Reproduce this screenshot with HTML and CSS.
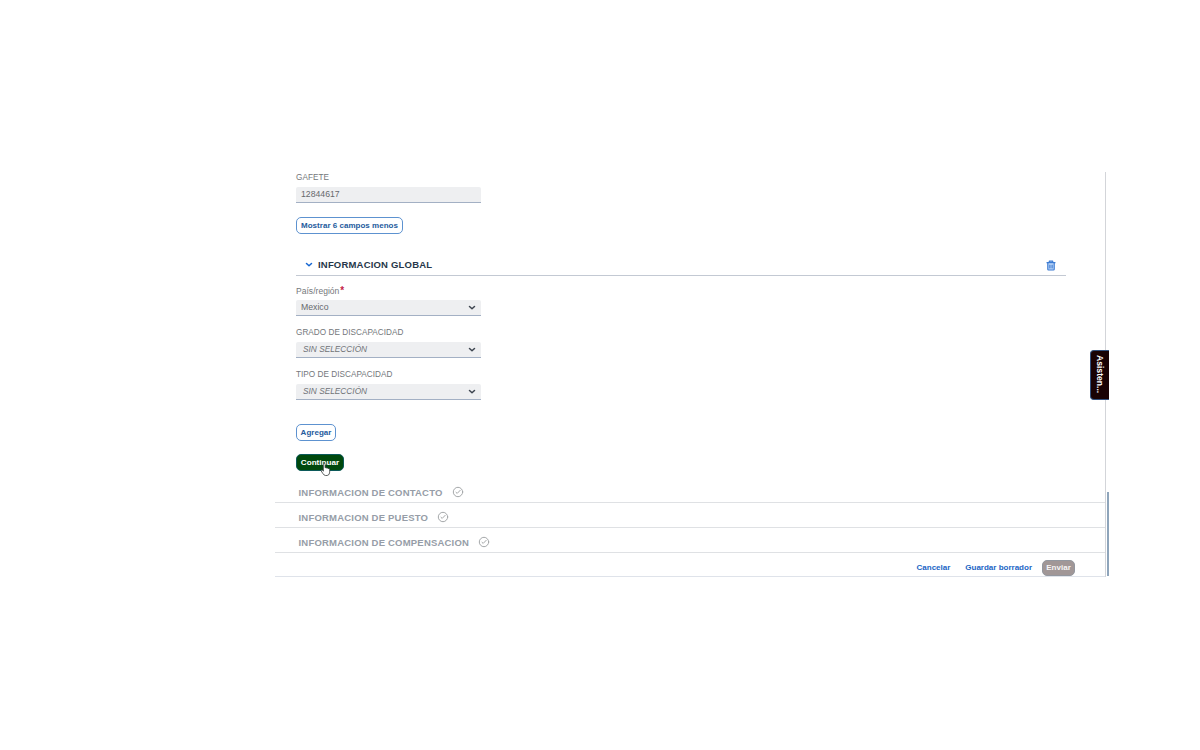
FILE: index.html
```html
<!DOCTYPE html>
<html lang="es">
<head>
<meta charset="utf-8">
<title>Información global</title>
<link rel="stylesheet" href="styles.css">
</head>
<body>
<svg class="defs" aria-hidden="true">
  <symbol id="check" viewBox="0 0 12 12"><circle cx="6" cy="6" r="4.7"/><path d="M4 6.3 5.2 7.4 8.2 4.3"/></symbol>
  <symbol id="chevron" viewBox="0 0 8 6"><path d="M1.5 1.5 4 3.8 6.5 1.5"/></symbol>
</svg>
<main class="app">
  <div class="content">
    <section class="form">
      <label class="label"><span>GAFETE</span></label>
      <div class="field number"><span>12844617</span></div>
      <button class="btn outline more"><span>Mostrar 6 campos menos</span></button>
      <header class="section-head">
        <svg class="toggle"><use href="#chevron"/></svg>
        <h2>INFORMACION GLOBAL</h2>
        <svg class="trash" viewBox="0 0 10 11"><path d="M1 2.7h8M3.3 2.5V1.2h3.4v1.3M1.8 3v6.2q0 .8.8.8h4.8q.8 0 .8-.8V3M3.9 5v3M6.1 5v3"/></svg>
      </header>
      <label class="label country"><span>País/región</span><b>*</b></label>
      <div class="field select"><span>Mexico</span><svg><use href="#chevron"/></svg></div>
      <label class="label next"><span>GRADO DE DISCAPACIDAD</span></label>
      <div class="field select empty"><span>SIN SELECCIÓN</span><svg><use href="#chevron"/></svg></div>
      <label class="label next"><span>TIPO DE DISCAPACIDAD</span></label>
      <div class="field select empty"><span>SIN SELECCIÓN</span><svg><use href="#chevron"/></svg></div>
      <button class="btn outline add"><span>Agregar</span></button>
      <button class="btn primary"><span>Continuar</span>
        <svg class="cursor" viewBox="0 0 11 14"><path d="M3.3 8.2V1.8q0-1 .9-1t.9 1v3.4q1.2-.5 1.5.3 1.1-.4 1.4.5 1.5-.3 1.7 1v2.6q0 3-2.5 3.4H5.4Q3.9 12.8 3 11.2L1.2 8.5q-.4-1 .5-1.1.7 0 1.6.8Z"/></svg>
      </button>
    </section>
    <div class="step first"><h3>INFORMACION DE CONTACTO</h3><svg><use href="#check"/></svg></div>
    <div class="step"><h3>INFORMACION DE PUESTO</h3><svg><use href="#check"/></svg></div>
    <div class="step"><h3>INFORMACION DE COMPENSACION</h3><svg><use href="#check"/></svg></div>
    <footer class="actions">
      <a class="cancel">Cancelar</a><a class="draft">Guardar borrador</a><button class="btn send"><span>Enviar</span></button>
    </footer>
  </div>
  <div class="thumb"></div>
  <aside class="assistant"><span>Asisten...</span></aside>
</main>
</body>
</html>
```
FILE: styles.css
```css
* { box-sizing: border-box; }
body { margin: 0; background: #fff; font-family: "Liberation Sans", sans-serif; }
.defs { position: absolute; width: 0; height: 0; }
svg { fill: none; stroke-linecap: round; stroke-linejoin: round; }
.app { position: relative; display: flex; width: 834px; height: 405px; margin: 172px 0 0 275px; }
.content { width: 831px; border-right: 1px solid #d3d5d9; }
.form { height: 308px; padding-left: 21px; display: flex; flex-direction: column; align-items: flex-start; }
.label { height: 12px; margin-bottom: 3px; font-size: 8.2px; line-height: 12px; letter-spacing: .03px; color: #74777b; display: flex; white-space: nowrap; }
.label b { margin-left: 1px; color: #c42348; font-size: 10px; }
.country { font-size: 8.5px; }
.label.next { margin-top: 11px; }
.field { width: 185px; height: 16px; flex: none; padding: 0 5px; background: #eeeff1; border-bottom: 1px solid #a3b0c4; border-radius: 2px 2px 0 0; font-size: 8.7px; line-height: 15px; color: #66696d; display: flex; justify-content: space-between; align-items: center; white-space: nowrap; }
.field svg { width: 8px; height: 6px; margin-right: .5px; stroke: #3e4650; stroke-width: 1.5; }
.field.empty { font-style: italic; padding-left: 7px; color: #707378; font-size: 8.3px; }
.btn { position: relative; height: 17px; flex: none; padding: 0; border: 1px solid #5d92d0; border-radius: 5px; background: #fff; color: #255b9d; font: bold 8px/15px "Liberation Sans", sans-serif; letter-spacing: .02px; white-space: nowrap; }
.more { width: 107px; margin-top: 14px; }
.section-head { width: 770px; height: 21px; margin: 21px 0 9px; display: flex; align-items: center; border-bottom: 1px solid #c3c9d3; }
.toggle { width: 8px; height: 6px; margin: 0 5px 0 9px; stroke: #1767d2; stroke-width: 1.5; }
h2 { margin: 0; font-size: 9.5px; line-height: 16px; font-weight: bold; letter-spacing: .19px; color: #26374a; white-space: nowrap; }
.trash { width: 10px; height: 11px; margin-left: auto; margin-right: 10px; stroke: #3c7bd2; stroke-width: 1.2; fill: #c2dafa; }
.add { width: 40px; margin-top: 24px; }
.primary { width: 48px; margin-top: 13px; background: #00490d; border-color: #0c5a5a; color: #fff; font-size: 8.1px; }
.cursor { position: absolute; width: 11px; height: 15px; left: 22.5px; top: 6.5px; fill: #fff; stroke: #353a3a; stroke-width: .8; }
.step { height: 25px; padding: 6px 0 0 23.5px; display: flex; align-items: flex-start; border-bottom: 1px solid #dfe1e4; }
.first { height: 23px; padding-top: 4px; }
h3 { margin: 0; font-size: 9.5px; line-height: 17px; font-weight: bold; letter-spacing: .2px; color: #969da7; white-space: nowrap; }
.step svg { width: 12px; height: 12px; margin: 2px 0 0 9px; stroke: #a5a8aa; stroke-width: 1; }
.actions { height: 24px; display: flex; align-items: center; justify-content: flex-end; padding: 6px 30px 0 0; border-bottom: 1px solid #dfe3ea; font-size: 8px; font-weight: bold; color: #1b65c5; white-space: nowrap; }
.draft { margin: 0 10px 0 15px; }
.send { width: 33px; height: 16px; line-height: 14px; background: #a19797; border-color: #93979f; color: #f6f4f4; }
.thumb { width: 2px; height: 84px; margin: 320px 0 0 1px; background: #8fa5bb; }
.assistant { position: absolute; left: 815px; top: 178px; width: 19px; height: 50px; background: #190204; border: 1px solid #32507c; border-right: 0; border-radius: 4px 0 0 4px; color: #fff; font-size: 8.6px; font-weight: 700; line-height: 18px; writing-mode: vertical-rl; padding-top: 4px; white-space: nowrap; }
```
